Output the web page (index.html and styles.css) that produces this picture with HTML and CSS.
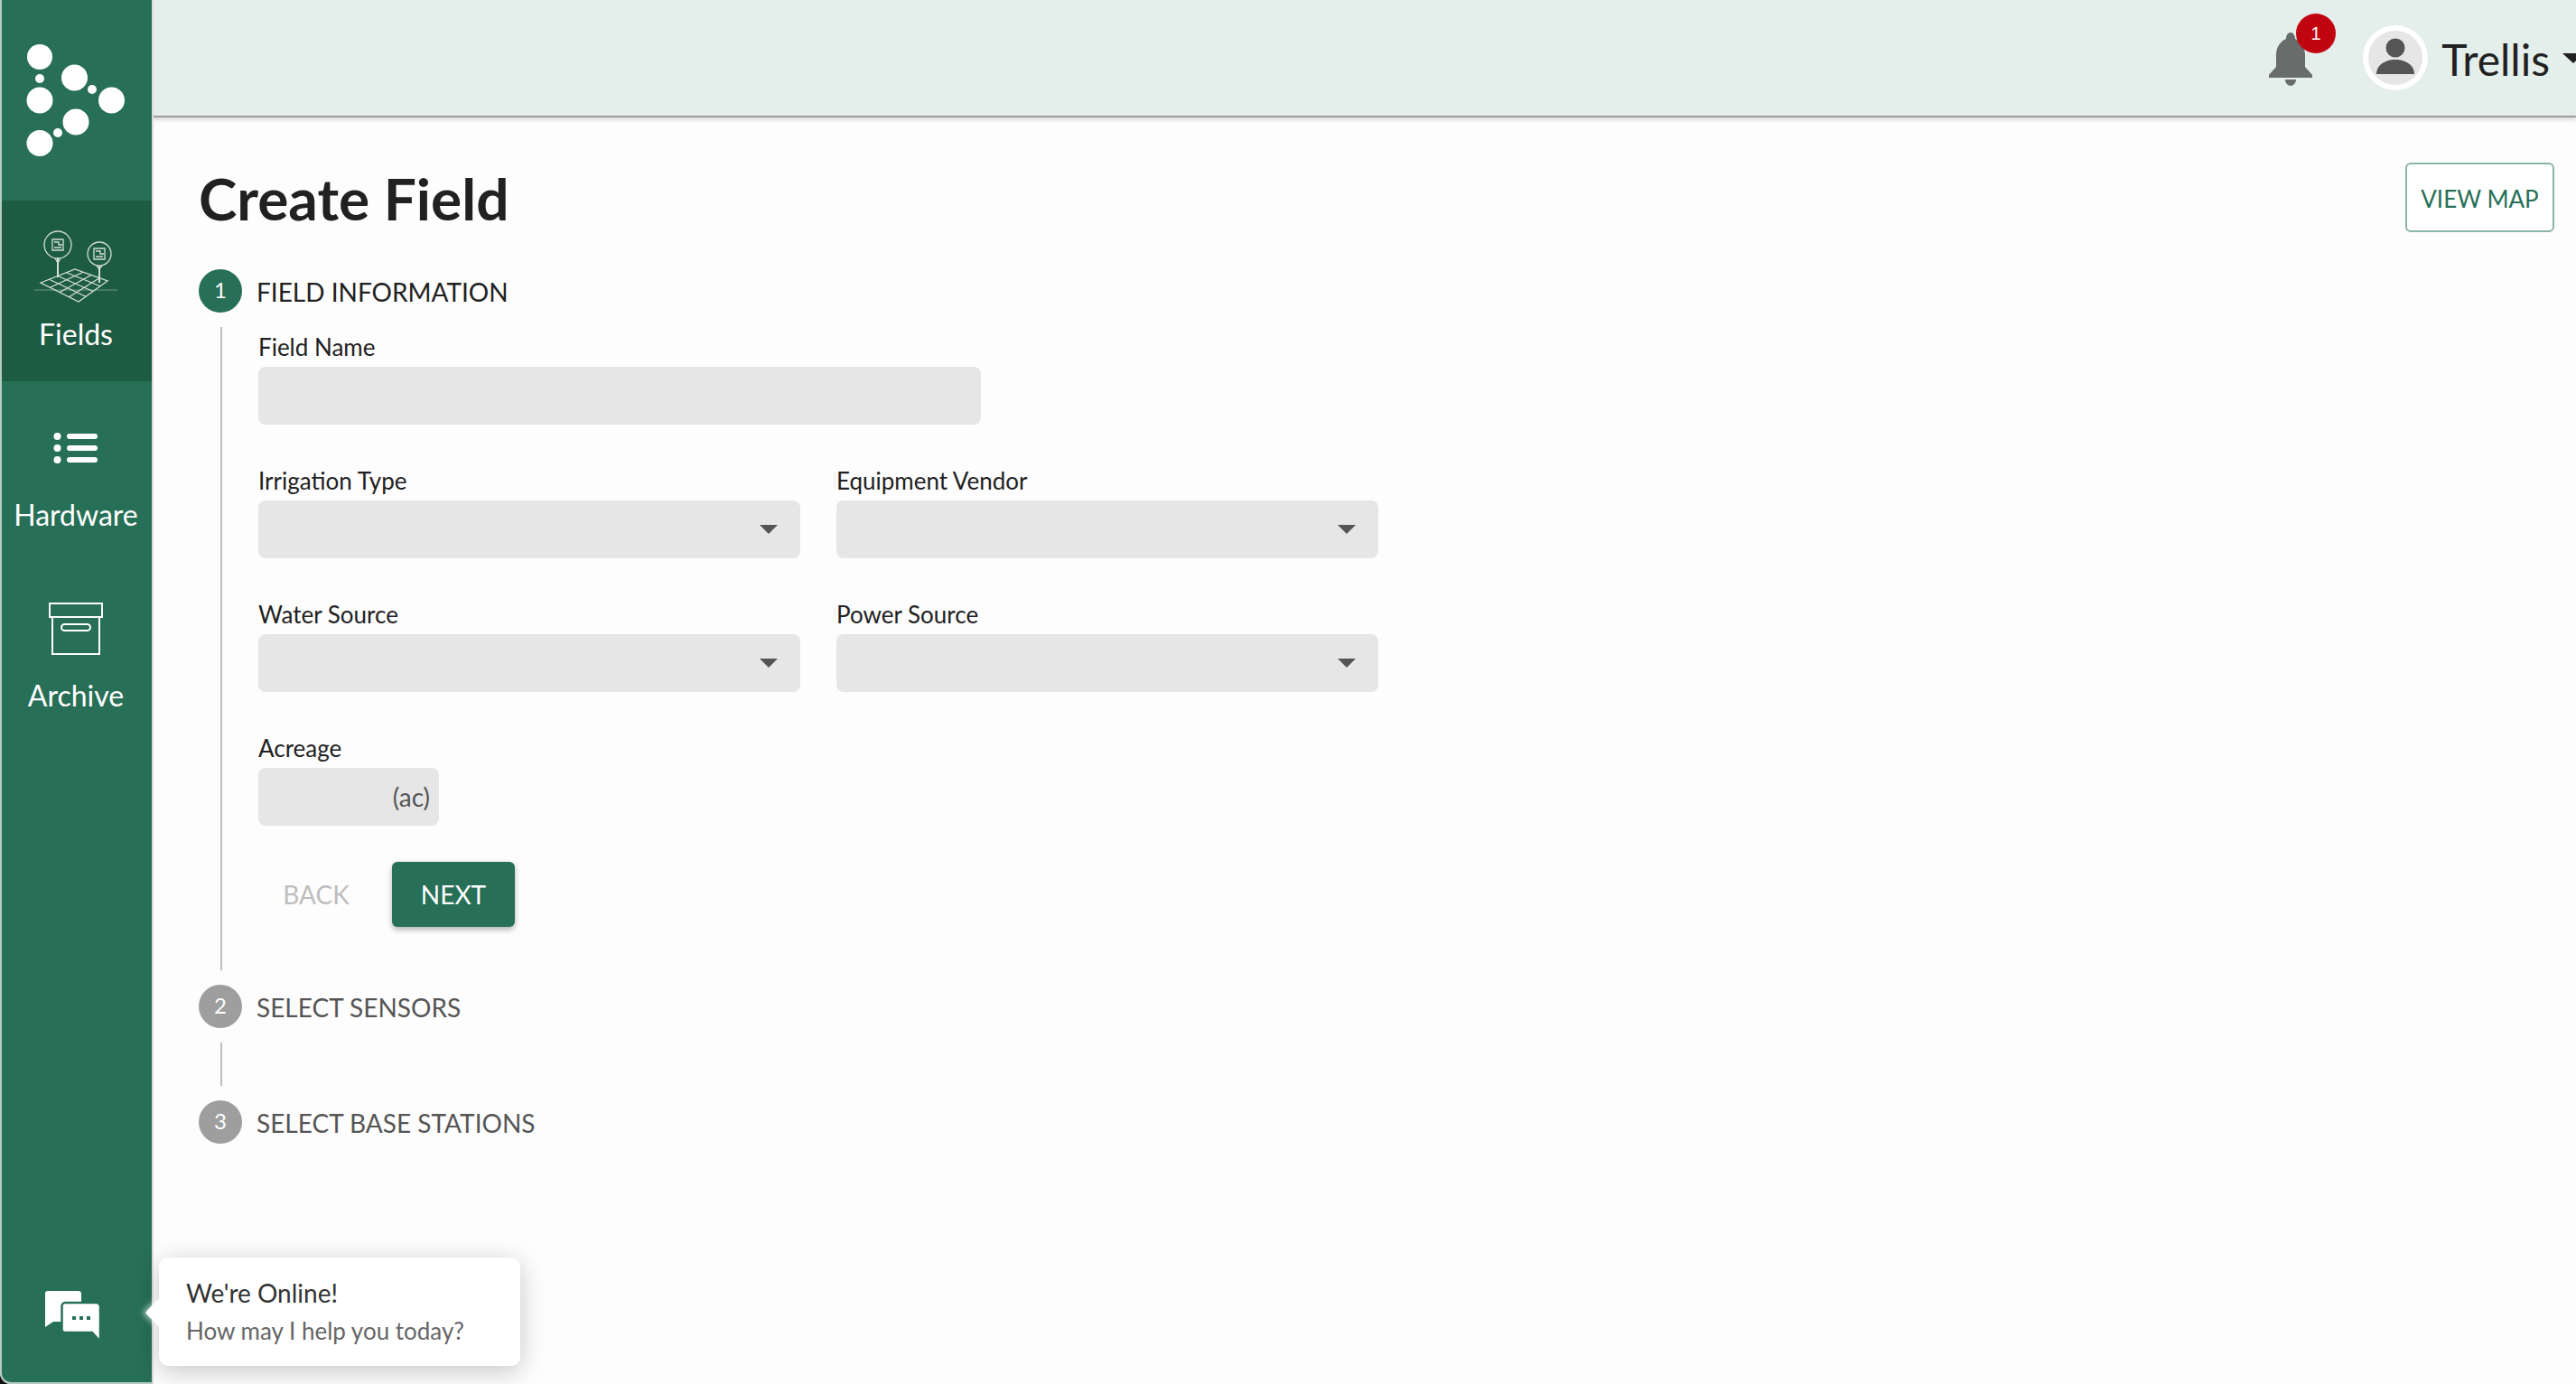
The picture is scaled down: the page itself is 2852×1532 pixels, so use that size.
FILE: index.html
```html
<!DOCTYPE html>
<html lang="en">
<head>
<meta charset="utf-8">
<title>Create Field</title>
<link rel="stylesheet" href="styles.css">
</head>
<body>
<div class="app">
  <aside class="sidebar">
    <div class="logo-box">
      <svg class="logo" width="168" height="222" viewBox="0 0 168 222" fill="#fff">
        <circle cx="44" cy="63" r="14"/><circle cx="44" cy="87" r="5"/><circle cx="44" cy="111" r="14.5"/>
        <circle cx="82.500" cy="86" r="14.500"/><circle cx="102" cy="99" r="5"/><circle cx="123.500" cy="111" r="14.500"/>
        <circle cx="84" cy="135" r="14.500"/><circle cx="64" cy="147" r="5"/><circle cx="44" cy="158.500" r="14.500"/>
      </svg>
    </div>
    <nav class="nav">
      <a class="nav-item active">
        <span class="nav-icon">
          <svg width="100" height="100" viewBox="34 23 100 100" fill="none" stroke="#d3dfd9" stroke-width="1.300">
            <path d="M38 98H130" stroke="#6f9a88" stroke-width="1"/>
            <path d="M45 90 83 75 119 88 87 111Z M54.500 86.250 95 105.250 M64 82.500 103 99.500 M73.500 78.750 111 93.750 M55.500 95.250 92 78.250 M66 100.500 101 81.500 M76.500 105.750 110 84.750"/>
            <path d="M64 62V84M110 72V90" stroke-width="2"/>
            <circle cx="64" cy="48" r="15"/><circle cx="110" cy="58" r="13"/>
            <path d="M61 63 64 68 67 63M107 71 110 75 113 71"/>
            <path d="M58 42H70V54H58ZM60 45H65V48H69M60 51H68M104 52H116V64H104ZM106 55H111V58H115M106 61H114"/>
          </svg>
        </span>
        <span class="nav-label">Fields</span>
      </a>
      <a class="nav-item">
        <span class="nav-icon">
          <svg width="100" height="100" viewBox="34 446 100 100" fill="#fff">
            <circle cx="63.500" cy="483" r="4"/><circle cx="63.500" cy="496" r="4"/><circle cx="63.500" cy="509" r="4"/>
            <rect x="74" y="480" width="34" height="6" rx="3"/><rect x="74" y="493" width="34" height="6" rx="3"/><rect x="74" y="506" width="34" height="6" rx="3"/>
          </svg>
        </span>
        <span class="nav-label">Hardware</span>
      </a>
      <a class="nav-item">
        <span class="nav-icon">
          <svg width="100" height="100" viewBox="34 646 100 100" fill="none" stroke="#fff" stroke-width="2">
            <rect x="55" y="668" width="58" height="15"/>
            <rect x="58" y="683" width="52" height="41"/>
            <rect x="68" y="691" width="32" height="7" rx="3.500"/>
          </svg>
        </span>
        <span class="nav-label">Archive</span>
      </a>
    </nav>
    <div class="chat-launch">
      <svg width="60" height="54" viewBox="50 1429 60 54">
        <path fill="#fff" d="M53 1429H87C89 1429 90 1430 90 1432V1460C90 1462 89 1463 87 1463H59L50 1469V1432C50 1430 51 1429 53 1429Z"/>
        <path fill="#fff" stroke="#276f56" stroke-width="2.500" d="M72 1442H107C109 1442 111 1444 111 1446V1485L102 1475H72C70 1475 68.500 1474 68.500 1472V1446C68.500 1444 70 1442 72 1442Z"/>
        <path fill="#276f56" d="M80 1457H84V1461H80ZM88 1457H92V1461H88ZM96 1457H100V1461H96Z"/>
      </svg>
    </div>
  </aside>

  <div class="column">
    <header class="topbar">
      <div class="bell">
        <svg width="48" height="60" viewBox="0 0 48 60" fill="#686c6a">
          <path d="M19 7C19 3 21 0 24 0C27 0 29 3 29 7C36 10 40 17 40 25V38L48 47V50H0V47L8 38V25C8 17 12 10 19 7Z"/>
          <path d="M18 52H30C30 56 27 59 24 59C21 59 18 56 18 52Z"/>
        </svg>
        <span class="badge">1</span>
      </div>
      <div class="avatar">
        <svg width="60" height="60" viewBox="0 0 60 60" fill="#555">
          <circle cx="30" cy="19" r="10.500"/>
          <path d="M9 48C9 38 19 32 30 32C41 32 51 38 51 48Z"/>
        </svg>
      </div>
      <span class="user-name">Trellis</span>
      <span class="user-caret"></span>
    </header>

    <main class="content">
      <div class="title-row">
        <h1 class="title">Create Field</h1>
        <button class="view-map">VIEW MAP</button>
      </div>

      <div class="step">
        <span class="step-num current">1</span>
        <span class="step-label current">FIELD INFORMATION</span>
      </div>
      <div class="step-body">
        <div class="field">
          <label class="field-label">Field Name</label>
          <div class="input wide"></div>
        </div>
        <div class="field-row">
          <div class="field">
            <label class="field-label">Irrigation Type</label>
            <div class="input select"><span class="arrow"></span></div>
          </div>
          <div class="field">
            <label class="field-label">Equipment Vendor</label>
            <div class="input select"><span class="arrow"></span></div>
          </div>
        </div>
        <div class="field-row">
          <div class="field">
            <label class="field-label">Water Source</label>
            <div class="input select"><span class="arrow"></span></div>
          </div>
          <div class="field">
            <label class="field-label">Power Source</label>
            <div class="input select"><span class="arrow"></span></div>
          </div>
        </div>
        <div class="field">
          <label class="field-label">Acreage</label>
          <div class="input acreage"><span class="unit">(ac)</span></div>
        </div>
        <div class="actions">
          <button class="btn-back">BACK</button>
          <button class="btn-next">NEXT</button>
        </div>
      </div>

      <div class="step">
        <span class="step-num">2</span>
        <span class="step-label">SELECT SENSORS</span>
      </div>
      <div class="step-gap"></div>
      <div class="step">
        <span class="step-num">3</span>
        <span class="step-label">SELECT BASE STATIONS</span>
      </div>
    </main>
  </div>

  <div class="chat-pop">
    <span class="chat-tip"></span>
    <div class="chat-title">We're Online!</div>
    <div class="chat-sub">How may I help you today?</div>
  </div>
</div>
</body>
</html>
```

FILE: styles.css
```css
* { box-sizing: border-box; }
html, body { margin: 0; height: 100%; }
body {
  background: #111;
  font-family: "Lato", "Liberation Sans", sans-serif;
  color: #212121;
}
.app {
  position: relative;
  display: flex;
  width: 100%;
  height: 100vh;
  overflow: hidden;
  background: #fdfdfd;
  border-radius: 0 0 0 12px;
}
.sidebar {
  flex: 0 0 168px;
  display: flex;
  flex-direction: column;
  background: #276f56;
  border-left: 2px solid #b3cdc2;
  border-bottom: 2px solid #b3cdc2;
  border-radius: 0 0 0 12px;
  box-shadow: 2px 0 0 #dcdcdc;
  z-index: 2;
}
.logo-box { height: 222px; margin-left: -2px; }
.logo { display: block; }
.nav { display: flex; flex-direction: column; }
.nav-item {
  height: 200px;
  display: flex;
  flex-direction: column;
  align-items: center;
  padding-top: 24px;
  color: #fff;
}
.nav-item.active { background: #1d5b43; }
.nav-icon { display: block; height: 100px; margin-left: -2px; }
.nav-icon svg { display: block; }
.nav-label { margin-left: -2px; margin-top: 4px; font-size: 32px; line-height: 40px; }
.chat-launch { margin-top: auto; padding: 0 0 47px 48px; }
.chat-launch svg { display: block; }

.column { flex: 1; min-width: 0; display: flex; flex-direction: column; }
.topbar {
  flex: 0 0 130px;
  display: flex;
  align-items: center;
  justify-content: flex-end;
  background: #e4eeea;
  border-bottom: 2px solid #9c9f9e;
  box-shadow: 0 2px 5px rgba(0, 0, 0, .18);
  overflow: hidden;
}
.bell { position: relative; width: 48px; height: 60px; margin: 4px 56px 0 0; }
.bell svg { display: block; }
.badge {
  position: absolute;
  left: 30px;
  top: -21px;
  width: 44px;
  height: 44px;
  border-radius: 50%;
  background: #c00510;
  color: #fff;
  font: 20px/44px "Liberation Sans", sans-serif;
  text-align: center;
}
.avatar {
  width: 72px;
  height: 72px;
  padding: 6px;
  border-radius: 50%;
  background: #fff;
  margin-right: 15px;
}
.avatar svg { display: block; background: #e6e6e6; border-radius: 50%; }
.user-name { font-size: 48px; line-height: 64px; padding-top: 4px; color: #212121; }
.user-caret {
  flex: none;
  margin: 0 -9px 0 14px;
  border-left: 12px solid transparent;
  border-right: 12px solid transparent;
  border-top: 11px solid #212121;
}

.content { flex: 1; padding: 50px 24px 0 52px; }
.title-row { display: flex; align-items: center; justify-content: space-between; height: 77px; }
.title { margin: 0; padding-top: 2px; font-size: 64px; font-weight: 700; line-height: 75px; color: #212121; }
.view-map {
  width: 165px;
  height: 77px;
  padding: 2px 0 0;
  background: #fff;
  border: 2px solid #8ab5a6;
  border-radius: 6px;
  color: #276f56;
  font: 26px "Lato", sans-serif;
}
.step { display: flex; align-items: center; height: 48px; margin-top: 41px; }
.step-body + .step { margin-top: 16px; }
.step-gap + .step { margin-top: 16px; }
.step-num {
  flex: none;
  width: 48px;
  height: 48px;
  margin-right: 16px;
  border-radius: 50%;
  background: #9e9e9e;
  color: #fff;
  font-size: 24px;
  line-height: 46px;
  text-align: center;
}
.step-num.current { background: #276f56; }
.step-label { padding-top: 2px; font-size: 28px; line-height: 46px; color: #555; }
.step-label.current { color: #212121; }
.step-body {
  margin: 16px 0 0 24px;
  padding: 6px 0 48px 40px;
  border-left: 2px solid #bdbdbd;
  display: flex;
  flex-direction: column;
  gap: 46px;
}
.step-gap { height: 48px; margin: 16px 0 0 24px; border-left: 2px solid #bdbdbd; }
.field-row { display: grid; grid-template-columns: 600px 600px; column-gap: 40px; }
.field-label { display: block; font-size: 26px; line-height: 32px; margin-bottom: 6px; color: #212121; }
.input { height: 64px; background: #e6e6e6; border-radius: 8px; }
.wide { width: 800px; }
.select { display: flex; align-items: center; justify-content: flex-end; padding-right: 25px; }
.arrow {
  border-left: 10px solid transparent;
  border-right: 10px solid transparent;
  border-top: 10px solid #555;
}
.acreage {
  width: 200px;
  display: flex;
  align-items: center;
  justify-content: flex-end;
  padding-right: 10px;
  color: #555;
  font-size: 28px;
}
.actions { display: flex; align-items: center; gap: 20px; margin-top: -6px; }
.btn-back {
  width: 128px;
  height: 72px;
  padding: 0;
  background: none;
  border: 0;
  color: #bdbdbd;
  font: 28px "Lato", sans-serif;
}
.btn-next {
  width: 136px;
  height: 72px;
  padding: 0;
  background: #276f56;
  border: 0;
  border-radius: 6px;
  color: #fff;
  font: 28px "Lato", sans-serif;
  box-shadow: 0 3px 6px rgba(0, 0, 0, .3);
}

.chat-pop {
  position: absolute;
  left: 176px;
  top: 1392px;
  width: 400px;
  height: 120px;
  padding: 17px 30px 0;
  background: #fff;
  border-radius: 10px;
  box-shadow: 0 6px 28px rgba(0, 0, 0, .22);
  z-index: 3;
}
.chat-tip {
  position: absolute;
  left: -11px;
  top: 50px;
  width: 22px;
  height: 22px;
  background: #fff;
  border-radius: 3px;
  transform: rotate(45deg);
  box-shadow: -2px 2px 6px rgba(255, 255, 255, .6);
}
.chat-title { font-size: 28px; line-height: 44px; color: #333; }
.chat-sub { font-size: 26px; line-height: 40px; color: #666; }
```
